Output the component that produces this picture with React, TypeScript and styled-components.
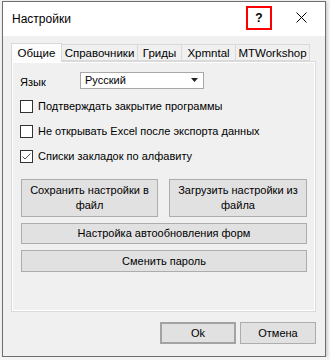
import React from 'react'
import styled, { createGlobalStyle } from 'styled-components'

const GlobalStyle = createGlobalStyle`
  html, body {
    margin: 0;
    padding: 0;
    background: #f4f4f4;
  }
  body {
    font-family: 'Segoe UI', 'Liberation Sans', Arial, sans-serif;
    font-size: 11px;
    color: #000;
  }
`

const Window = styled.div`
  box-sizing: border-box;
  width: 324px;
  height: 356px;
  margin: 1px 0 0 2px;
  border: 1px solid #6f6f6f;
  background: #f0f0f0;
  box-shadow: 1px 1px 3px rgba(0, 0, 0, 0.2);
  display: flex;
  flex-direction: column;
`

const TitleBar = styled.div`
  height: 34px;
  background: #fff;
  display: flex;
  align-items: center;
  padding-left: 9px;
  flex-shrink: 0;
`

const Title = styled.div`
  flex: 1;
  font-size: 12px;
  padding-bottom: 1px;
`

const HelpButton = styled.div`
  box-sizing: border-box;
  width: 26px;
  height: 24px;
  margin-bottom: 3px;
  border: 2px solid #ff0000;
  display: flex;
  align-items: center;
  justify-content: center;
  font-size: 12px;
  font-weight: bold;
`

const CloseButton = styled.div`
  width: 48px;
  height: 34px;
  margin-left: 5px;
  display: flex;
  align-items: center;
  justify-content: center;
  padding-bottom: 3px;
  box-sizing: border-box;
`

const Body = styled.div`
  flex: 1;
  display: flex;
  flex-direction: column;
  padding: 7px 9px 12px 8px;
`

const TabStrip = styled.div`
  display: flex;
  align-items: flex-end;
  height: 18px;
  position: relative;
  z-index: 1;
`

const Tab = styled.div<{ $w: number; $active?: boolean }>`
  box-sizing: border-box;
  width: ${(p) => p.$w}px;
  height: ${(p) => (p.$active ? 19 : 17)}px;
  margin-bottom: ${(p) => (p.$active ? -1 : 0)}px;
  margin-left: -1px;
  border: 1px solid #d9d9d9;
  border-bottom: ${(p) => (p.$active ? 'none' : '1px solid #d9d9d9')};
  background: ${(p) => (p.$active ? '#fcfcfc' : '#f0f0f0')};
  display: flex;
  align-items: center;
  justify-content: center;
  white-space: nowrap;
  font-size: 11.5px;
  line-height: 14px;
  padding-top: ${(p) => (p.$active ? 0 : 1)}px;
  &:first-child {
    margin-left: 0;
  }
`

const Panel = styled.div`
  box-sizing: border-box;
  height: 251px;
  border: 1px solid #dadada;
  box-shadow: inset 0 0 0 1px #fff;
  padding: 10px 8px 0 8px;
  display: flex;
  flex-direction: column;
`

const LangRow = styled.div`
  display: flex;
  align-items: center;
  height: 16px;
`

const Label = styled.div`
  width: 60px;
  padding-top: 3px;
`

const Select = styled.div`
  box-sizing: border-box;
  width: 124px;
  height: 17px;
  background: #fff;
  border: 1px solid #a8a8a8;
  display: flex;
  align-items: center;
  padding: 0 5px 0 4px;
`

const SelectText = styled.div`
  flex: 1;
`

const CheckList = styled.div`
  display: flex;
  flex-direction: column;
  gap: 11px;
  margin-top: 11px;
`

const CheckRow = styled.label`
  display: flex;
  align-items: center;
  gap: 5px;
  height: 14px;
`

const Box = styled.div`
  box-sizing: border-box;
  width: 13px;
  height: 13px;
  background: #fff;
  border: 1px solid #333;
  display: flex;
  align-items: center;
  justify-content: center;
`

const ButtonGrid = styled.div`
  display: grid;
  grid-template-columns: 137px 138px;
  column-gap: 11px;
  row-gap: 6px;
  margin: 16px 0 0 1px;
`

const Button = styled.div<{ $h: number; $span?: boolean }>`
  box-sizing: border-box;
  height: ${(p) => p.$h}px;
  grid-column: ${(p) => (p.$span ? '1 / span 2' : 'auto')};
  background: #e1e1e1;
  border: 1px solid #adadad;
  display: flex;
  align-items: center;
  justify-content: center;
  text-align: center;
  line-height: 15px;
  padding: 0 4px;
`

const Footer = styled.div`
  display: flex;
  justify-content: flex-end;
  gap: 4px;
  margin-top: 10px;
`

const DialogButton = styled.div<{ $default?: boolean }>`
  box-sizing: border-box;
  width: 76px;
  height: 22px;
  background: #e1e1e1;
  border: ${(p) => (p.$default ? '2px solid #a3a3a3' : '1px solid #adadad')};
  display: flex;
  align-items: center;
  justify-content: center;
`

const tabs = [
  { name: 'Общие', w: 51, active: true },
  { name: 'Справочники', w: 77 },
  { name: 'Гриды', w: 45 },
  { name: 'Xpmntal', w: 55 },
  { name: 'MTWorkshop', w: 75 },
]

const checks = [
  { text: 'Подтверждать закрытие программы', on: false },
  { text: 'Не открывать Excel после экспорта данных', on: false },
  { text: 'Списки закладок по алфавиту', on: true },
]

export default function App() {
  return (
    <>
      <GlobalStyle />
      <Window>
        <TitleBar>
          <Title>Настройки</Title>
          <HelpButton>?</HelpButton>
          <CloseButton>
            <svg width="11" height="11" viewBox="0 0 11 11">
              <path d="M0.5 0.5 L10.5 10.5 M10.5 0.5 L0.5 10.5" stroke="#000" strokeWidth="1" />
            </svg>
          </CloseButton>
        </TitleBar>
        <Body>
          <TabStrip>
            {tabs.map((t) => (
              <Tab key={t.name} $w={t.w} $active={t.active}>
                {t.name}
              </Tab>
            ))}
          </TabStrip>
          <Panel>
            <LangRow>
              <Label>Язык</Label>
              <Select>
                <SelectText>Русский</SelectText>
                <svg width="7" height="4" viewBox="0 0 7 4">
                  <path d="M0 0 H7 L3.5 4 Z" fill="#222" />
                </svg>
              </Select>
            </LangRow>
            <CheckList>
              {checks.map((c) => (
                <CheckRow key={c.text}>
                  <Box>
                    {c.on && (
                      <svg width="11" height="11" viewBox="0 0 11 11">
                        <path d="M1.5 5.5 L4 8 L9.5 2.5" stroke="#555" strokeWidth="1" fill="none" />
                      </svg>
                    )}
                  </Box>
                  {c.text}
                </CheckRow>
              ))}
            </CheckList>
            <ButtonGrid>
              <Button $h={38}>Сохранить настройки в файл</Button>
              <Button $h={38}>Загрузить настройки из файла</Button>
              <Button $h={21} $span>
                Настройка автообновления форм
              </Button>
              <Button $h={22} $span>
                Сменить пароль
              </Button>
            </ButtonGrid>
          </Panel>
          <Footer>
            <DialogButton $default>Ok</DialogButton>
            <DialogButton>Отмена</DialogButton>
          </Footer>
        </Body>
      </Window>
    </>
  )
}
